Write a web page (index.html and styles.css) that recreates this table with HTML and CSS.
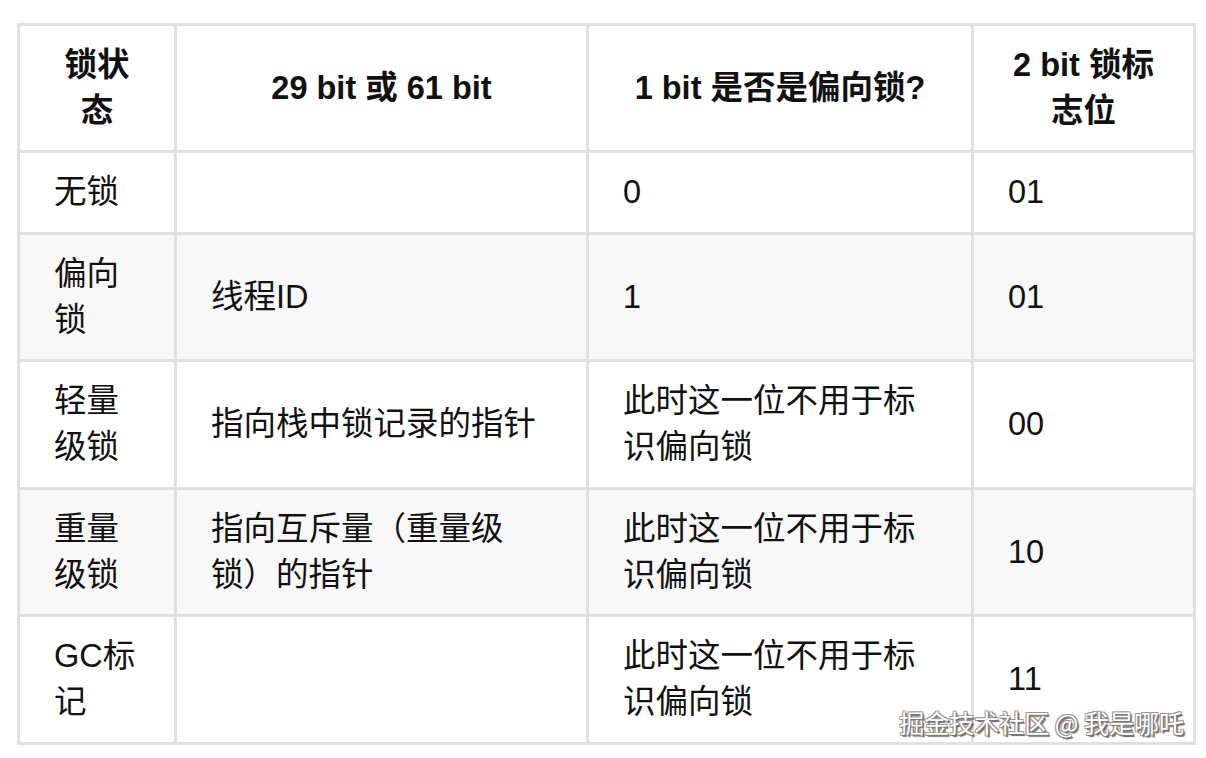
FILE: index.html
```html
<!DOCTYPE html>
<html lang="zh-CN">
<head>
<meta charset="utf-8">
<link rel="stylesheet" href="styles.css">
</head>
<body>
<div class="page">
  <table class="lock-table">
    <thead>
      <tr>
        <th class="c1">锁状态</th>
        <th class="c2">29 bit 或 61 bit</th>
        <th class="c3">1 bit 是否是偏向锁?</th>
        <th class="c4">2 bit 锁标志位</th>
      </tr>
    </thead>
    <tbody>
      <tr>
        <td>无锁</td>
        <td></td>
        <td>0</td>
        <td>01</td>
      </tr>
      <tr class="alt">
        <td>偏向锁</td>
        <td>线程ID</td>
        <td>1</td>
        <td>01</td>
      </tr>
      <tr>
        <td>轻量级锁</td>
        <td>指向栈中锁记录的指针</td>
        <td>此时这一位不用于标识偏向锁</td>
        <td>00</td>
      </tr>
      <tr class="alt">
        <td>重量级锁</td>
        <td>指向互斥量（重量级锁）的指针</td>
        <td>此时这一位不用于标识偏向锁</td>
        <td>10</td>
      </tr>
      <tr>
        <td>GC标记</td>
        <td></td>
        <td>此时这一位不用于标识偏向锁</td>
        <td>11</td>
      </tr>
    </tbody>
  </table>
  <div class="watermark">掘金技术社区 @ 我是哪吒</div>
</div>
</body>
</html>
```
FILE: styles.css
```css
html, body {
  margin: 0;
  padding: 0;
  background: #fff;
}
body {
  font-family: "Liberation Sans", "Noto Sans CJK SC", sans-serif;
  color: #111;
}
.page {
  position: relative;
  width: 1206px;
  height: 758px;
  padding: 23px 0 0 17px;
  box-sizing: border-box;
}
.lock-table {
  border-collapse: separate;
  border-spacing: 0;
  table-layout: fixed;
  width: 1179px;
  box-sizing: border-box;
  border-top: 3px solid #e0e0e0;
  border-left: 3px solid #e0e0e0;
  font-size: 32.5px;
  line-height: 46px;
  text-spacing-trim: space-all;
}
.lock-table th,
.lock-table td {
  box-sizing: border-box;
  border-right: 3px solid #e0e0e0;
  border-bottom: 3px solid #e0e0e0;
  padding: 16px 34px 16.5px;
  vertical-align: middle;
  text-align: left;
  font-weight: normal;
  word-break: break-all;
}
.lock-table th {
  font-weight: bold;
  text-align: center;
  padding: 16px 34px;
}
.lock-table th.c1 { width: 157px; }
.lock-table th.c2 { width: 412px; }
.lock-table th.c3 { width: 385px; }
.lock-table th.c4 { width: 222px; }
.lock-table tr.alt td {
  background: #f8f8f8;
}
.watermark {
  position: absolute;
  right: 22px;
  bottom: 21px;
  font-size: 25px;
  line-height: 30px;
  color: #fff;
  font-family: "Noto Sans CJK SC", sans-serif;
  text-shadow: 1px 1px 0 #777, -1px -1px 0 #999, 1px -1px 0 #999, -1px 1px 0 #999, 2px 2px 1px #666;
}
```
